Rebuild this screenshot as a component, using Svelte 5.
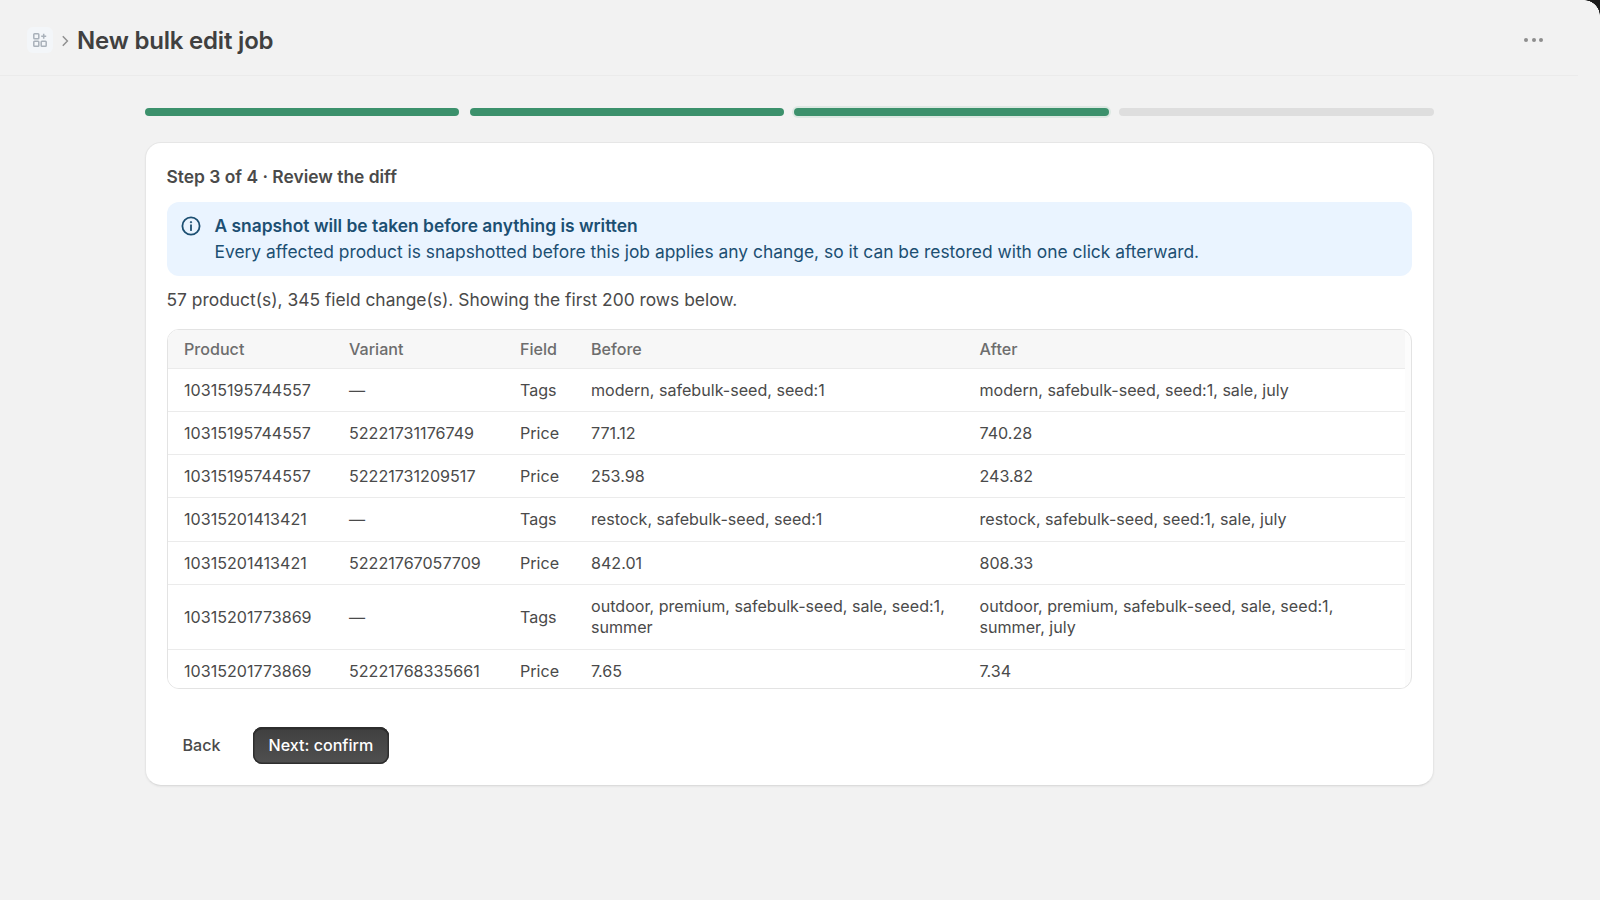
<script>
  const rows = [
    ['10315195744557', '—', 'Tags', 'modern, safebulk-seed, seed:1', 'modern, safebulk-seed, seed:1, sale, july'],
    ['10315195744557', '52221731176749', 'Price', '771.12', '740.28'],
    ['10315195744557', '52221731209517', 'Price', '253.98', '243.82'],
    ['10315201413421', '—', 'Tags', 'restock, safebulk-seed, seed:1', 'restock, safebulk-seed, seed:1, sale, july'],
    ['10315201413421', '52221767057709', 'Price', '842.01', '808.33'],
    ['10315201773869', '—', 'Tags', 'outdoor, premium, safebulk-seed, sale, seed:1, summer', 'outdoor, premium, safebulk-seed, sale, seed:1, summer, july'],
    ['10315201773869', '52221768335661', 'Price', '7.65', '7.34']
  ];
  const steps = ['done', 'done', 'current', 'todo'];
</script>

<div class="page">
  <div class="corner"></div>
  <header class="topbar">
    <div class="crumbs">
      <span class="appicon">
        <svg width="16" height="16" viewBox="0 0 16 16" fill="none" stroke="#a9b1ba" stroke-width="1.5">
          <rect x="1.8" y="1.8" width="5" height="5" rx="0.8" />
          <rect x="1.8" y="9.2" width="5" height="5" rx="0.8" />
          <rect x="9.2" y="9.2" width="5" height="5" rx="0.8" />
          <path d="M11.7 1.8v5M9.2 4.3h5" />
        </svg>
      </span>
      <svg class="chev" width="12" height="12" viewBox="0 0 12 12" fill="none" stroke="#919191" stroke-width="1.5">
        <path d="M3.8 1.2 8.4 6l-4.6 4.8" />
      </svg>
      <h1>New bulk edit job</h1>
    </div>
    <div class="more"><i></i><i></i><i></i></div>
  </header>

  <main class="content">
    <div class="progress">
      {#each steps as s}
        <div class="seg {s}"></div>
      {/each}
    </div>

    <section class="card">
      <h2>Step 3 of 4 · Review the diff</h2>

      <div class="banner">
        <svg class="info" width="20" height="20" viewBox="0 0 20 20" fill="none" stroke="#1c4f72" stroke-width="1.8">
          <circle cx="10" cy="10" r="8.6" />
          <path d="M10 9.2v5" stroke-linecap="round" />
          <circle cx="10" cy="6.2" r="0.7" fill="#1c4f72" stroke-width="0.9" />
        </svg>
        <div>
          <p class="b-title">A snapshot will be taken before anything is written</p>
          <p class="b-text">Every affected product is snapshotted before this job applies any change, so it can be restored with one click afterward.</p>
        </div>
      </div>

      <p class="summary">57 product(s), 345 field change(s). Showing the first 200 rows below.</p>

      <div class="tablewrap">
        <table>
          <colgroup>
            <col class="c1" /><col class="c2" /><col class="c3" /><col class="c4" /><col />
          </colgroup>
          <thead>
            <tr><th>Product</th><th>Variant</th><th>Field</th><th>Before</th><th>After</th></tr>
          </thead>
          <tbody>
            {#each rows as r}
              <tr>
                {#each r as c}<td>{c}</td>{/each}
              </tr>
            {/each}
          </tbody>
        </table>
      </div>

      <div class="actions">
        <button class="back">Back</button>
        <button class="next">Next: confirm</button>
      </div>
    </section>
  </main>
</div>

<style>
  :global(body) {
    margin: 0;
    background: #f2f2f2;
    font-family: Inter, "Liberation Sans", sans-serif;
    color: #303030;
  }
  .page {
    height: 900px;
    overflow: hidden;
    position: relative;
  }
  .corner {
    position: absolute;
    top: 0;
    right: 0;
    width: 16px;
    height: 16px;
    background: radial-gradient(circle at 0 100%, #f2f2f2 15.5px, #1a1a1a 16px);
  }
  .topbar {
    height: 76px;
    margin-right: 22px;
    border-bottom: 1px solid #ebebeb;
    display: flex;
    align-items: center;
    justify-content: space-between;
    padding: 5px 26px 0 27px;
    box-sizing: border-box;
  }
  .crumbs {
    display: flex;
    align-items: center;
  }
  .appicon {
    width: 26px;
    height: 26px;
    border-radius: 6px;
    background: #f3f6f9;
    display: flex;
    align-items: center;
    justify-content: center;
  }
  .chev {
    margin: 1.5px 5.6px 0 6.4px;
  }
  h1 {
    margin: 0;
    font-size: 24px;
    font-weight: 600;
    color: #404040;
    letter-spacing: -0.2px;
  }
  .more {
    display: flex;
    gap: 3.3px;
    padding-right: 9px;
  }
  .more i {
    width: 4px;
    height: 4px;
    border-radius: 50%;
    background: #8e8e8e;
  }
  .content {
    width: 1289.5px;
    margin: 0 auto 0 144.5px;
    padding-top: 32px;
  }
  .progress {
    display: grid;
    grid-template-columns: repeat(4, 1fr);
    gap: 10.4px;
    padding: 0 0.5px;
  }
  .seg {
    height: 8px;
    border-radius: 4px;
    background: #dedede;
  }
  .seg.done,
  .seg.current {
    background: #3c916c;
  }
  .seg.current {
    box-shadow: 0 0 0 2px #dce8e2;
  }
  .card {
    margin-top: 26px;
    background: #fff;
    border-radius: 16px;
    border: 1px solid #e6e6e6;
    border-bottom-color: #dcdcdc;
    box-shadow: 0 1px 2px rgba(0, 0, 0, 0.05);
    padding: 22px 21px;
    height: 644px;
    box-sizing: border-box;
  }
  h2 {
    margin: 0;
    font-size: 17.4px;
    line-height: 24px;
    font-weight: 600;
    color: #4a4a4a;
  }
  .banner {
    margin-top: 13px;
    background: #eaf4ff;
    border-radius: 12px;
    padding: 11px 14px;
    display: flex;
    gap: 14px;
    color: #1c4f72;
    height: 74px;
    box-sizing: border-box;
  }
  .info {
    flex: none;
    margin: 3px 0 0;
  }
  .banner p {
    margin: 0;
    font-size: 17.4px;
    line-height: 26.2px;
  }
  .b-title {
    font-weight: 600;
  }
  .summary {
    margin: 10.5px 0 0;
    font-size: 17.4px;
    line-height: 26px;
    color: #4a4a4a;
  }
  .tablewrap {
    margin-top: 16.5px;
    height: 360px;
    overflow: hidden;
    border: 1px solid #e3e3e3;
    border-radius: 12px;
    box-sizing: border-box;
    padding: 0 6px 0 0.5px;
    background: #fcfcfc;
  }
  table {
    width: 100%;
    border-collapse: collapse;
    table-layout: fixed;
    font-size: 16.1px;
    line-height: 21.3px;
    color: #4a4a4a;
    background: #fff;
  }
  .c1 { width: 165px; }
  .c2 { width: 171px; }
  .c3 { width: 71px; }
  .c4 { width: 388.5px; }
  th {
    text-align: left;
    font-weight: 500;
    color: #6d6d6d;
    background: #f7f7f7;
    padding: 9px 16px 7px;
    height: 38px;
    box-sizing: border-box;
  }
  td {
    padding: 11px 16px 10px;
    border-top: 1px solid #ebebeb;
  }
  .actions {
    display: flex;
    align-items: center;
    gap: 16px;
    margin-top: 38px;
  }
  button {
    font: inherit;
    font-size: 16.1px;
    font-weight: 500;
    cursor: pointer;
    border: 0;
    background: none;
  }
  .back {
    color: #4a4a4a;
    padding: 7px 16px 9px;
  }
  .next {
    height: 37px;
    padding: 0 16px 2px;
    border-radius: 9px;
    color: #fff;
    background: linear-gradient(#3f3f3f, #505050);
    box-shadow: inset 0 0 0 1.5px #2e2e2e, inset 0 2.5px 0 #2e2e2e;
  }
</style>
